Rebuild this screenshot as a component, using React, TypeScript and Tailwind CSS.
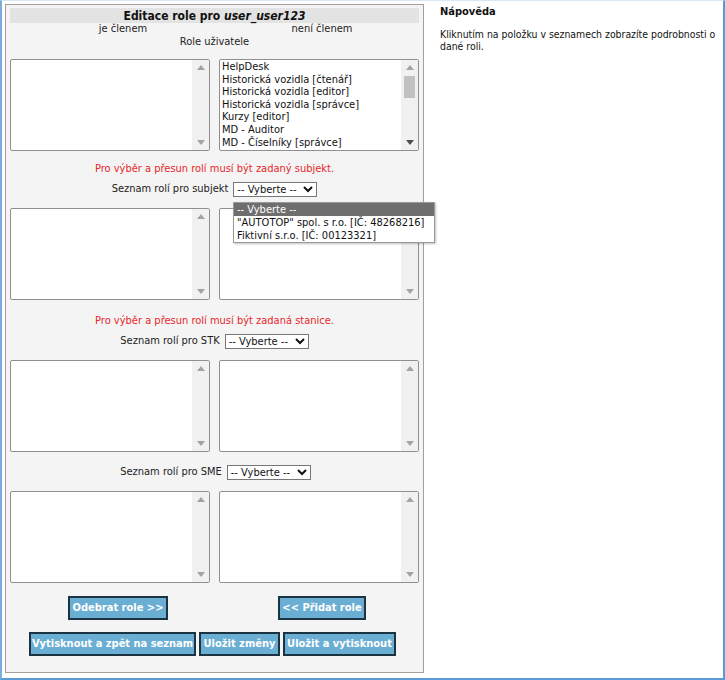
import React from "react";

const font = { fontFamily: '"DejaVu Sans Condensed", "DejaVu Sans", Verdana, sans-serif' };

function Arrow({ dir, dark }: { dir: "up" | "down"; dark?: boolean }) {
  return (
    <svg width="8" height="5" viewBox="0 0 8 5" className="block">
      {dir === "up" ? (
        <polygon points="0,5 8,5 4,0" fill={dark ? "#505050" : "#a3a3a3"} />
      ) : (
        <polygon points="0,0 8,0 4,5" fill={dark ? "#505050" : "#a3a3a3"} />
      )}
    </svg>
  );
}

function ListBox({ items, thumb }: { items?: string[]; thumb?: boolean }) {
  return (
    <div className="flex w-[200px] h-[92px] border border-[#8f8f8f] rounded-[2px] bg-white overflow-hidden">
      <div className="flex-1 pl-[2px] pt-[1px] text-[11px] leading-[12.6px] text-[#111] overflow-hidden whitespace-nowrap">
        {items?.map((t) => (
          <div key={t}>{t}</div>
        ))}
      </div>
      <div className="w-[17px] bg-[#f1f1f1] flex flex-col items-center justify-between py-[5px] relative">
        <Arrow dir="up" />
        {thumb && <div className="absolute top-[16px] left-[3px] w-[11px] h-[22px] bg-[#c1c1c1]" />}
        <Arrow dir="down" dark={!!thumb} />
      </div>
    </div>
  );
}

function Select() {
  return (
    <div className="flex items-center justify-between w-[84px] h-[15px] border border-[#767676] bg-white pl-[3px] pr-[3px] text-[11px] leading-none text-[#111]">
      <span>-- Vyberte --</span>
      <svg width="10" height="7" viewBox="0 0 10 7">
        <polyline points="1,1 5,5 9,1" fill="none" stroke="#111" strokeWidth="2" />
      </svg>
    </div>
  );
}

function Btn({ children, w }: { children: React.ReactNode; w: string }) {
  return (
    <div
      className={`${w} h-[24px] flex items-center justify-center whitespace-nowrap bg-[#6aaed3] border-2 border-[#1c3442] text-white font-bold text-[11px]`}
    >
      {children}
    </div>
  );
}

export default function App() {
  return (
    <div
      style={font}
      className="w-[725px] h-[680px] bg-white border-l-2 border-r-2 border-b-2 border-t border-l-[#7aaedd] border-r-[#5b9bd5] border-b-[#5b9bd5] border-t-[#d8e8f5] flex text-[#222]"
    >
      <div className="ml-[3px] mt-[3px] w-[419px] h-[669px] border border-[#a79e9c] bg-[#f4f4f4] px-[4px] pt-[3px] flex flex-col relative">
        <div className="h-[15px] bg-[#e3e3e3] flex items-center justify-center text-[12px] font-bold text-[#111]">
          Editace role pro&nbsp;<i>user_user123</i>
        </div>
        <div className="flex h-[12px] items-center text-[11px]">
          <div className="w-[204px] text-center pl-[22px]">je členem</div>
          <div className="w-[204px] text-center pl-[12px]">není členem</div>
        </div>
        <div className="h-[12px] mt-[1px] flex items-center justify-center text-[11px]">Role uživatele</div>
        <div className="flex justify-between mt-[11px]">
          <ListBox />
          <ListBox
            thumb
            items={[
              "HelpDesk",
              "Historická vozidla [čtenář]",
              "Historická vozidla [editor]",
              "Historická vozidla [správce]",
              "Kurzy [editor]",
              "MD - Auditor",
              "MD - Číselníky [správce]",
            ]}
          />
        </div>
        <div className="h-[12px] mt-[12px] flex items-center justify-center text-[11px] text-[#e8262a]">
          Pro výběr a přesun rolí musí být zadaný subjekt.
        </div>
        <div className="h-[15px] mt-[7px] flex justify-center items-center gap-[5px] text-[11px]">
          <span>Seznam rolí pro subjekt</span>
          <Select />
        </div>
        <div className="flex justify-between mt-[11px]">
          <ListBox />
          <ListBox />
        </div>
        <div className="h-[12px] mt-[15px] flex items-center justify-center text-[11px] text-[#e8262a]">
          Pro výběr a přesun rolí musí být zadaná stanice.
        </div>
        <div className="h-[15px] mt-[7px] flex justify-center items-center gap-[5px] text-[11px]">
          <span>Seznam rolí pro STK</span>
          <Select />
        </div>
        <div className="flex justify-between mt-[11px]">
          <ListBox />
          <ListBox />
        </div>
        <div className="h-[15px] mt-[13px] flex justify-center items-center gap-[5px] text-[11px] pl-[2px]">
          <span>Seznam rolí pro SME</span>
          <Select />
        </div>
        <div className="flex justify-between mt-[11px]">
          <ListBox />
          <ListBox />
        </div>
        <div className="flex mt-[13px]">
          <div className="ml-[58px]">
            <Btn w="w-[100px]">Odebrat role &gt;&gt;</Btn>
          </div>
          <div className="ml-[110px]">
            <Btn w="w-[88px]">&lt;&lt; Přidat role</Btn>
          </div>
        </div>
        <div className="flex gap-[3px] mt-[12px] ml-[19px]">
          <Btn w="w-[167px]">Vytisknout a zpět na seznam</Btn>
          <Btn w="w-[81px]">Uložit změny</Btn>
          <Btn w="w-[113px]">Uložit a vytisknout</Btn>
        </div>

        <div className="absolute left-[227px] top-[197px] w-[202px] bg-white border border-[#9a9a9a] shadow-[1px_1px_2px_rgba(0,0,0,0.25)] text-[11px] leading-[13px] text-[#111] z-10">
          <div className="bg-[#6e6e6e] text-white px-[3px]">-- Vyberte --</div>
          <div className="px-[3px] whitespace-nowrap">"AUTOTOP" spol. s r.o. [IČ: 48268216]</div>
          <div className="px-[3px] whitespace-nowrap">Fiktivní s.r.o. [IČ: 00123321]</div>
        </div>
      </div>
      <div className="ml-[16px] mt-[4px] w-[283px] text-[11px] text-[#111]">
        <div className="font-bold leading-[13px]">Nápověda</div>
        <div className="mt-[10px] leading-[12px] text-[10.4px]">
          Kliknutím na položku v seznamech zobrazíte podrobnosti o dané roli.
        </div>
      </div>
    </div>
  );
}
